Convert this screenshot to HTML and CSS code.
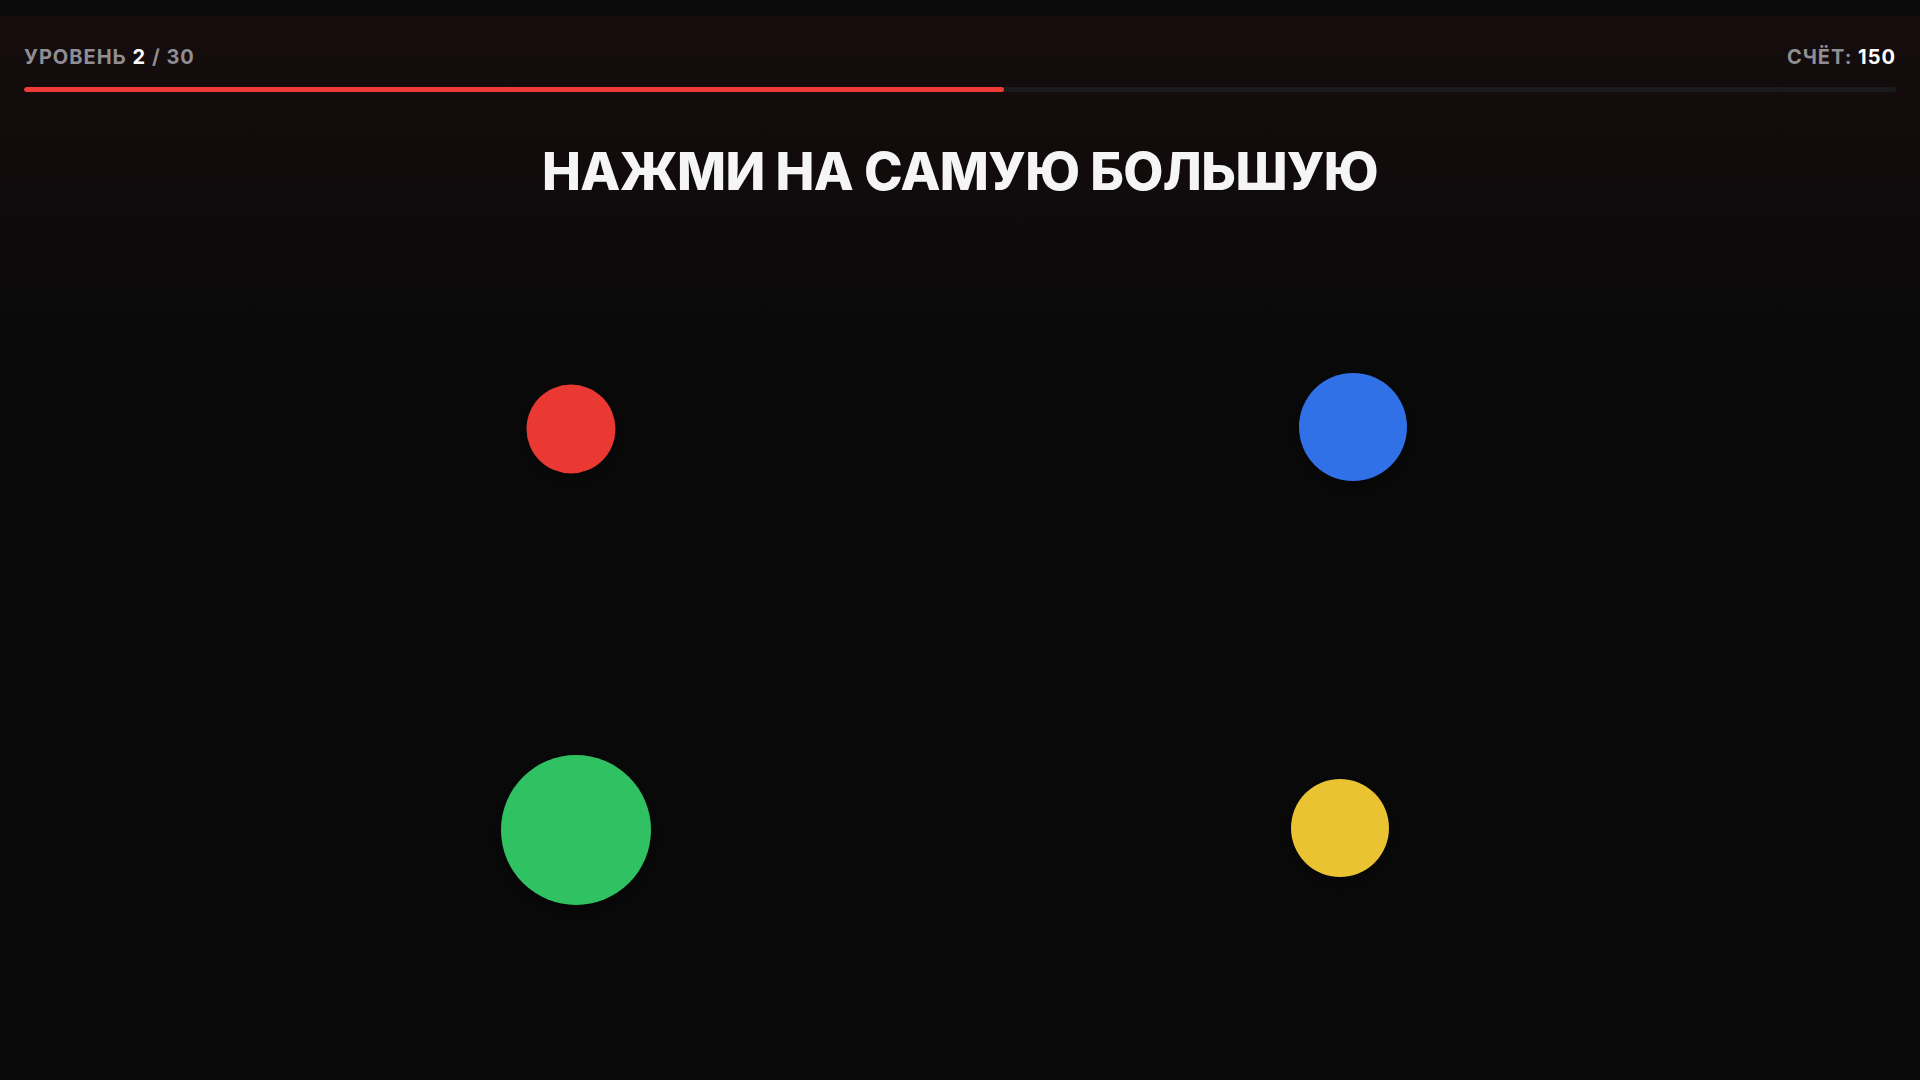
FILE: index.html
```html
<!DOCTYPE html>
<html lang="ru">
<head>
<meta charset="utf-8">
<title>Нажми на самую большую</title>
<link rel="stylesheet" href="styles.css">
</head>
<body>
<div class="topstrip"></div>
<main class="game">
  <header class="hud">
    <div class="hud-item">УРОВЕНЬ <span class="hud-value">2</span> / 30</div>
    <div class="hud-item">СЧЁТ: <span class="hud-value">150</span></div>
  </header>
  <div class="progress"><div class="progress-fill" style="width: 52.35%"></div></div>
  <h1 class="prompt">НАЖМИ НА САМУЮ БОЛЬШУЮ</h1>
  <div class="field">
    <button class="dot dot-red" style="left: 571px; top: 226px; width: 89px; height: 89px;" aria-label="красный"></button>
    <button class="dot dot-blue" style="left: 1353px; top: 224px; width: 108px; height: 108px;" aria-label="синий"></button>
    <button class="dot dot-green" style="left: 576px; top: 627px; width: 150px; height: 150px;" aria-label="зелёный"></button>
    <button class="dot dot-yellow" style="left: 1340px; top: 625px; width: 98px; height: 98px;" aria-label="жёлтый"></button>
  </div>
</main>
</body>
</html>
```

FILE: styles.css
```css
* { box-sizing: border-box; }

html, body {
  margin: 0;
  padding: 0;
  height: 100%;
  background: #0a0a0b;
  font-family: Inter, "Noto Sans", "Liberation Sans", sans-serif;
  overflow: hidden;
}

.topstrip {
  height: 16px;
  background: #0b0b0c;
}

.game {
  height: 1064px;
  display: flex;
  flex-direction: column;
  padding-top: 29px;
  background: linear-gradient(to bottom, #160c0d 0px, #120b0c 120px, #0a0a0b 320px);
}

.hud {
  display: flex;
  justify-content: space-between;
  padding: 0 24px;
  height: 24px;
}

.hud-item {
  font-size: 20px;
  line-height: 24px;
  font-weight: 700;
  letter-spacing: 1px;
  color: #8e8e93;
}

.hud-value {
  color: #ffffff;
}

.progress {
  margin: 18px 24px 0;
  height: 5px;
  border-radius: 3px;
  background: #1b1b1e;
  overflow: hidden;
}

.progress-fill {
  height: 100%;
  border-radius: 3px;
  background: #ee3b36;
}

.prompt {
  margin: 49px 0 0;
  text-align: center;
  font-size: 52px;
  line-height: 62px;
  font-weight: 800;
  letter-spacing: -0.6px;
  color: #f5f5f5;
}

.field {
  position: relative;
  flex: 1;
}

.dot {
  position: absolute;
  transform: translate(-50%, -50%);
  border: none;
  padding: 0;
  border-radius: 50%;
  cursor: pointer;
  box-shadow: 0 6px 24px rgba(0, 0, 0, 0.45);
}

.dot-red { background: #ea3833; }
.dot-blue { background: #3071e8; }
.dot-green { background: #30c262; }
.dot-yellow { background: #e9c331; }
```
